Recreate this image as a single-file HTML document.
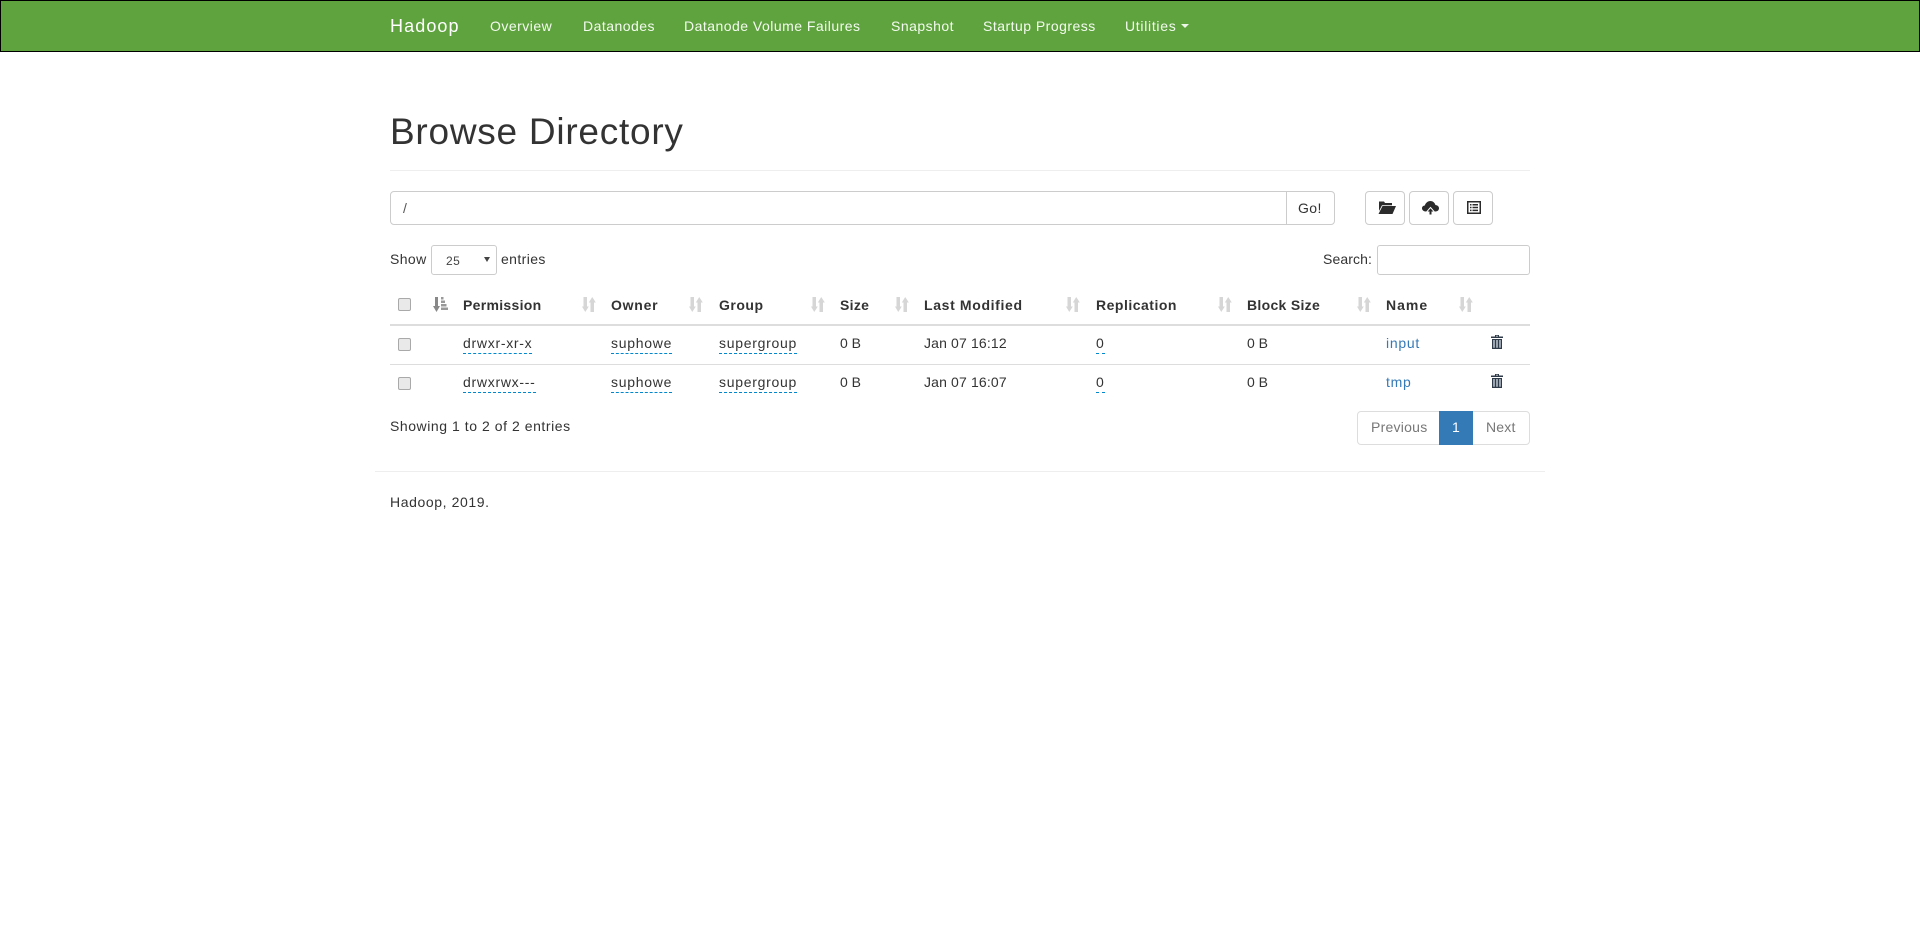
<!DOCTYPE html>
<html><head><meta charset="utf-8"><title>Browsing HDFS</title>
<style>
html,body{margin:0;padding:0;background:#fff;width:1920px;height:947px;overflow:hidden}
body{position:relative;font-family:"Liberation Sans",sans-serif;font-size:14px;color:#333}
.t{position:absolute;line-height:20px;height:20px;white-space:nowrap;letter-spacing:.4px}
.nav{position:absolute;left:0;top:0;width:1918px;height:50px;background:#5fa33e;border:1px solid #000}
.n{color:#f4fbf0;letter-spacing:.48px}
.b{font-weight:bold;letter-spacing:.3px;color:#333}
.r{letter-spacing:.72px}
.d{letter-spacing:.15px}
.l{color:#337ab7;letter-spacing:.72px}
.e{border-bottom:1px dashed #08c;letter-spacing:.72px}
.box{position:absolute;box-sizing:border-box;border:1px solid #ccc;border-radius:4px;background:#fff}
.cb{position:absolute;left:398px;width:13px;height:13px;box-sizing:border-box;border:1px solid #a9a9a9;border-radius:2px;background:#e9e9e9}
.line{position:absolute;background:#ddd}
svg{position:absolute;overflow:visible}
</style></head><body>
<div class="nav"></div>
<span class="t" style="left:390px;top:16px;font-size:18px;color:#fff;letter-spacing:1.1px">Hadoop</span>
<span class="t n" style="left:490px;top:16px">Overview</span>
<span class="t n" style="left:583px;top:16px">Datanodes</span>
<span class="t n" style="left:684px;top:16px">Datanode Volume Failures</span>
<span class="t n" style="left:891px;top:16px">Snapshot</span>
<span class="t n" style="left:983px;top:16px">Startup Progress</span>
<span class="t n" style="left:1125px;top:16px;letter-spacing:.7px">Utilities</span>
<svg style="left:1181px;top:24px" width="8" height="4"><path d="M0 0H8L4 4Z" fill="#eef6ea"/></svg>

<span class="t" style="left:390px;top:112px;height:40px;line-height:40px;font-size:37px;letter-spacing:.75px;color:#333">Browse Directory</span>
<div class="line" style="left:390px;top:170px;width:1140px;height:1px;background:#eee"></div>

<div class="box" style="left:390px;top:191px;width:897px;height:34px;border-radius:4px 0 0 4px"></div>
<span class="t" style="left:403px;top:198px;color:#555">/</span>
<div class="box" style="left:1286px;top:191px;width:49px;height:34px;border-radius:0 4px 4px 0"></div>
<span class="t" style="left:1298px;top:198px">Go!</span>
<div class="box" style="left:1365px;top:191px;width:40px;height:34px"></div>
<div class="box" style="left:1409px;top:191px;width:40px;height:34px"></div>
<div class="box" style="left:1453px;top:191px;width:40px;height:34px"></div>
<svg style="left:1378px;top:201px" width="18" height="13" viewBox="0 0 18 13"><path d="M1 0.500H6L7 2H14V4.200H4L1 10ZM4.500 5H18L14.500 13H0.500Z" fill="#2b2b2b"/></svg>
<svg style="left:1422px;top:201px" width="17" height="14" viewBox="0 0 17 14"><path d="M3.800 10.500C1.500 10.500 0 9 0 7.300C0 5.600 1.300 4.600 2.800 4.500C3.500 2 5.800 0 8.300 0C10.800 0 12.800 1.700 13.400 4C15.500 4.200 17 5.500 17 7.300C17 9.200 15.500 10.500 13.300 10.500Z" fill="#2b2b2b"/><path d="M8.500 6.500L12.500 11H10V14H7V11H4.500Z" fill="#2b2b2b" stroke="#fff" stroke-width="1"/></svg>
<svg style="left:1467px;top:201px" width="14" height="13" viewBox="0 0 14 13"><path d="M0 0H14V13H0ZM1.500 1.500V11.500H12.500V1.500Z" fill="#2b2b2b"/><path d="M3 3H4.500V4.500H3ZM5.500 3H11V4.500H5.500ZM3 5.800H4.500V7.300H3ZM5.500 5.800H11V7.300H5.500ZM3 8.600H4.500V10.100H3ZM5.500 8.600H11V10.100H5.500Z" fill="#2b2b2b"/></svg>

<span class="t" style="left:390px;top:249px">Show</span>
<div class="box" style="left:431px;top:245px;width:66px;height:30px;border-radius:3px"></div>
<span class="t" style="left:446px;top:251px;font-size:12px;color:#444">25</span>
<svg style="left:484px;top:257px" width="6" height="5"><path d="M0 0H6L3 5Z" fill="#444"/></svg>
<span class="t" style="left:501px;top:249px">entries</span>
<span class="t" style="left:1323px;top:249px;letter-spacing:.1px">Search:</span>
<div class="box" style="left:1377px;top:245px;width:153px;height:30px;border-radius:3px"></div>

<div class="cb" style="top:298px"></div>
<svg style="left:433px;top:297px" width="15" height="15" viewBox="0 0 15 15"><path d="M2 0H5V9H7L3.500 15L0 9H2Z" fill="#888"/><path d="M8 0H10.500V2.500H8ZM8 3.500H12V6H8ZM8 7H13.500V9.500H8ZM8 10.500H15V13H8Z" fill="#999"/></svg>
<span class="t b" style="left:463px;top:295px">Permission</span>
<span class="t b" style="left:611px;top:295px;letter-spacing:.75px">Owner</span>
<span class="t b" style="left:719px;top:295px;letter-spacing:.5px">Group</span>
<span class="t b" style="left:840px;top:295px">Size</span>
<span class="t b" style="left:924px;top:295px;letter-spacing:.65px">Last Modified</span>
<span class="t b" style="left:1096px;top:295px;letter-spacing:.5px">Replication</span>
<span class="t b" style="left:1247px;top:295px">Block Size</span>
<span class="t b" style="left:1386px;top:295px;letter-spacing:1px">Name</span>
<svg width="0" height="0" style="left:0;top:0"><defs><path id="s" d="M1.500 0H5V9.500H6.800L3.250 15L0 9.500H1.500ZM10.250 0L13.800 5.500H12V15H8.500V5.500H6.800Z" fill="#d6d6d6"/></defs></svg>
<svg style="left:582px;top:297px" width="14" height="15"><use href="#s"/></svg>
<svg style="left:689px;top:297px" width="14" height="15"><use href="#s"/></svg>
<svg style="left:811px;top:297px" width="14" height="15"><use href="#s"/></svg>
<svg style="left:895px;top:297px" width="14" height="15"><use href="#s"/></svg>
<svg style="left:1066px;top:297px" width="14" height="15"><use href="#s"/></svg>
<svg style="left:1218px;top:297px" width="14" height="15"><use href="#s"/></svg>
<svg style="left:1357px;top:297px" width="14" height="15"><use href="#s"/></svg>
<svg style="left:1459px;top:297px" width="14" height="15"><use href="#s"/></svg>
<div class="line" style="left:390px;top:324px;width:1140px;height:2px"></div>

<div class="cb" style="top:338px"></div>
<span class="t e" style="left:463px;top:333px">drwxr-xr-x</span>
<span class="t e" style="left:611px;top:333px">suphowe</span>
<span class="t e" style="left:719px;top:333px">supergroup</span>
<span class="t" style="left:840px;top:333px;letter-spacing:0">0 B</span>
<span class="t d" style="left:924px;top:333px">Jan 07 16:12</span>
<span class="t e" style="left:1096px;top:333px">0</span>
<span class="t" style="left:1247px;top:333px;letter-spacing:0">0 B</span>
<span class="t l" style="left:1386px;top:333px">input</span>
<svg style="left:1491px;top:335px" width="12" height="14" viewBox="0 0 12 14"><path d="M4 0H8V1.500H12V3H0V1.500H4ZM1 4H11V14H1Z" fill="#2f3a48"/><path d="M2.300 5H3.700V12.700H2.300ZM5.300 5H6.700V12.700H5.300ZM8.300 5H9.700V12.700H8.300Z" fill="#c9d3dc"/><path d="M5 .8H7V1.500H5Z" fill="#fff"/></svg>
<div class="line" style="left:390px;top:364px;width:1140px;height:1px"></div>

<div class="cb" style="top:377px"></div>
<span class="t e" style="left:463px;top:372px">drwxrwx---</span>
<span class="t e" style="left:611px;top:372px">suphowe</span>
<span class="t e" style="left:719px;top:372px">supergroup</span>
<span class="t" style="left:840px;top:372px;letter-spacing:0">0 B</span>
<span class="t d" style="left:924px;top:372px">Jan 07 16:07</span>
<span class="t e" style="left:1096px;top:372px">0</span>
<span class="t" style="left:1247px;top:372px;letter-spacing:0">0 B</span>
<span class="t l" style="left:1386px;top:372px">tmp</span>
<svg style="left:1491px;top:374px" width="12" height="14" viewBox="0 0 12 14"><path d="M4 0H8V1.500H12V3H0V1.500H4ZM1 4H11V14H1Z" fill="#2f3a48"/><path d="M2.300 5H3.700V12.700H2.300ZM5.300 5H6.700V12.700H5.300ZM8.300 5H9.700V12.700H8.300Z" fill="#c9d3dc"/><path d="M5 .8H7V1.500H5Z" fill="#fff"/></svg>

<span class="t" style="left:390px;top:416px;letter-spacing:.55px">Showing 1 to 2 of 2 entries</span>
<div class="box" style="left:1357px;top:411px;width:173px;height:34px;border-color:#ddd"></div>
<div style="position:absolute;left:1439px;top:411px;width:34px;height:34px;background:#337ab7"></div>
<span class="t" style="left:1371px;top:417px;color:#777;letter-spacing:.25px">Previous</span>
<span class="t" style="left:1452px;top:417px;color:#fff">1</span>
<span class="t" style="left:1486px;top:417px;color:#777;letter-spacing:.2px">Next</span>

<div class="line" style="left:375px;top:471px;width:1170px;height:1px;background:#eee"></div>
<span class="t" style="left:390px;top:492px;letter-spacing:.6px">Hadoop, 2019.</span>
</body></html>
